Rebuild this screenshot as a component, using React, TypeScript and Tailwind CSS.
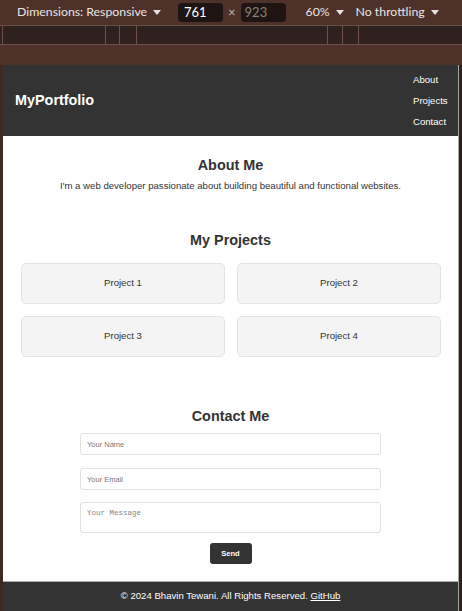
import React from "react";

const projects = ["Project 1", "Project 2", "Project 3", "Project 4"];

const Caret = () => (
  <svg width="8" height="6" viewBox="0 0 8 6" className="ml-[6px] inline-block">
    <path d="M0 0 L8 0 L4 5 Z" fill="#e6e0de" />
  </svg>
);

const DevToolbar: React.FC = () => (
  <div className="flex h-[25px] items-center whitespace-nowrap bg-[#4d3229] font-['Lato',sans-serif] text-[12.3px] text-[#e9e4e2]">
    <div className="ml-[17px] flex w-[161px] items-center">
      Dimensions: Responsive
      <Caret />
    </div>
    <div className="flex h-[19px] w-[45px] items-center rounded-[4px] bg-[#1e1512] pl-[6px] text-[13px] text-white">
      761
    </div>
    <span className="mx-[5px] text-[13px] text-[#bfb6b3]">×</span>
    <div className="flex h-[19px] w-[45px] items-center rounded-[4px] bg-[#1e1512] pl-[4px] text-[13px] text-[#8c817d]">
      923
    </div>
    <div className="ml-[20px] flex w-[50px] items-center">
      60%
      <Caret />
    </div>
    <div className="flex items-center">
      No throttling
      <Caret />
    </div>
  </div>
);

const Ruler: React.FC = () => {
  const marks = [2, 105, 119, 136, 327, 342, 358];
  return (
    <div className="relative h-[20px] border-y border-[#6d5047] bg-[#2f221e]">
      {marks.map((x) => (
        <div
          key={x}
          className="absolute top-0 h-full w-px bg-[#6d5047]"
          style={{ left: x }}
        />
      ))}
    </div>
  );
};

const Page: React.FC = () => (
  <div className="flex h-[546px] w-[455px] flex-col bg-white font-['Liberation_Sans',Arial,sans-serif] text-[#333]">
    <header className="flex h-[71px] shrink-0 items-center justify-between bg-[#333] pl-[12px] pr-[8px] text-white">
      <h1 className="text-[14.4px] font-bold">MyPortfolio</h1>
      <ul className="flex w-[37px] flex-col text-[9.6px] leading-[21px]">
        <li>About</li>
        <li>Projects</li>
        <li>Contact</li>
      </ul>
    </header>

    <section className="mt-[21px] text-center">
      <h2 className="text-[14.4px] font-bold leading-[17px]">About Me</h2>
      <p className="mt-[6px] text-[9.6px] leading-[11px]">
        I'm a web developer passionate about building beautiful and functional
        websites.
      </p>
    </section>

    <section className="mt-[41px] text-center">
      <h2 className="text-[14.4px] font-bold leading-[17px]">My Projects</h2>
      <div className="mt-[14px] grid grid-cols-2 gap-x-[12px] gap-y-[12px] pl-[18px] pr-[17px]">
        {projects.map((p) => (
          <div
            key={p}
            className="flex h-[41px] items-center justify-center rounded-[5px] border border-[#e4e4e4] bg-[#f4f4f4] text-[9.6px]"
          >
            {p}
          </div>
        ))}
      </div>
    </section>

    <section className="mt-[51px] flex flex-col items-center">
      <h2 className="text-[14.4px] font-bold leading-[17px]">Contact Me</h2>
      <input
        placeholder="Your Name"
        className="mt-[8px] h-[22px] w-[301px] rounded-[3px] border border-[#e2e2e2] px-[6px] text-[7.5px] placeholder:text-[#777]"
      />
      <input
        placeholder="Your Email"
        className="mt-[13px] h-[22px] w-[301px] rounded-[3px] border border-[#e2e2e2] px-[6px] text-[7.5px] placeholder:text-[#777]"
      />
      <textarea
        placeholder="Your Message"
        className="mt-[12px] h-[31px] w-[301px] resize-none rounded-[3px] border border-[#e2e2e2] px-[6px] pt-[5px] font-['Liberation_Mono',monospace] text-[7.5px] placeholder:text-[#888]"
      />
      <button className="mt-[10px] h-[21px] w-[42px] rounded-[3px] bg-[#333] text-[7.5px] font-bold text-white">
        Send
      </button>
    </section>

    <footer className="mt-auto flex h-[30px] shrink-0 items-center justify-center border-t border-[#b0b0b0] bg-[#333] text-[9.6px] text-white">
      © 2024 Bhavin Tewani. All Rights Reserved.&nbsp;
      <a className="underline">GitHub</a>
    </footer>
  </div>
);

export default function App() {
  return (
    <div className="h-[611px] w-[462px] overflow-hidden bg-[#4d3229]">
      <DevToolbar />
      <Ruler />
      <div className="h-[20px]" />
      <div className="flex">
        <div className="w-[3px] bg-[#3f2923]" />
        <Page />
        <div className="w-px bg-[#a8a8a8]" />
        <div className="w-[3px] bg-[#2b201c]" />
      </div>
    </div>
  );
}
